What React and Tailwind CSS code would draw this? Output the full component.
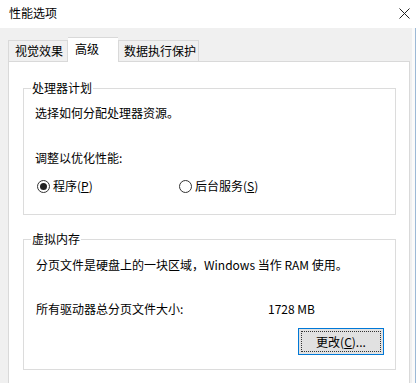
import React from 'react';

const Radio = ({ checked, label, hotkey }) => (
  <div className="flex items-center h-[16px]">
    <span className="w-[13px] h-[13px] rounded-full border border-[#333] bg-white flex items-center justify-center">
      {checked && <span className="w-[7px] h-[7px] rounded-full bg-[#222]" />}
    </span>
    <span className="ml-[3px]">
      {label}(<span className="underline">{hotkey}</span>)
    </span>
  </div>
);

const Group = ({ title, className, children }) => (
  <fieldset className={`border border-[#dcdcdc] w-[373px] ${className}`}>
    <legend className="ml-[7px] px-[1px] leading-[16px]">{title}</legend>
    {children}
  </fieldset>
);

export default function App() {
  return (
    <div className="w-[420px] h-[383px] overflow-hidden bg-white text-[12px] leading-[16px] text-black font-['Noto_Sans_CJK_SC','Noto_Sans',sans-serif]">
      {/* Title bar */}
      <div className="h-[28px] flex items-center justify-between pl-[9px] pr-[10px]">
        <span className="-mt-[2px]">性能选项</span>
        <svg width="11" height="11" viewBox="0 0 11 11" className="-mt-[2px]">
          <path d="M0.5 0.5 L10.5 10.5 M10.5 0.5 L0.5 10.5" stroke="#222" strokeWidth="1" fill="none" />
        </svg>
      </div>

      <div className="flex h-[355px]">
        <div className="w-[412px] bg-[#f0f0f0] pl-[8px] pt-[9px] flex flex-col">
          {/* Tabs */}
          <div className="flex items-end h-[24px] relative z-10">
            <div className="w-[60px] h-[21px] border border-b-0 border-[#d9d9d9] bg-[#f0f0f0] pl-[6px] flex items-center">
              视觉效果
            </div>
            <div className="w-[50px] h-[25px] -mb-px border-t border-[#d9d9d9] bg-white pl-[7px] pb-[3px] flex items-center">
              高级
            </div>
            <div className="w-[81px] h-[21px] border border-b-0 border-[#d9d9d9] bg-[#f0f0f0] pl-[5px] flex items-center">
              数据执行保护
            </div>
          </div>

          {/* Panel */}
          <div className="w-[402px] flex-1 bg-white border border-b-0 border-[#d9d9d9] pl-[14px] pt-[18px]">
            <Group title="处理器计划" className="h-[135px]">
              <div className="pl-[11px] pt-[9px]">
                <div>选择如何分配处理器资源。</div>
                <div className="mt-[29px]">调整以优化性能:</div>
                <div className="mt-[12px] flex">
                  <div className="w-[144px] pl-[2px]">
                    <Radio checked label="程序" hotkey="P" />
                  </div>
                  <Radio label="后台服务" hotkey="S" />
                </div>
              </div>
            </Group>

            <Group title="虚拟内存" className="mt-[16px] h-[139px]">
              <div className="pl-[12px] pt-[10px]">
                <div>分页文件是硬盘上的一块区域，Windows 当作 RAM 使用。</div>
                <div className="mt-[28px] flex">
                  <span className="w-[232px]">所有驱动器总分页文件大小:</span>
                  <span>1728 MB</span>
                </div>
                <div className="mt-[11px] flex justify-end pr-[11px]">
                  <div className="w-[86px] h-[27px] border border-[#0078d7] bg-[#e1e1e1] p-[2px]">
                    <div className="h-full border border-dotted border-[#333] flex items-center justify-center">
                      更改(<span className="underline">C</span>)...
                    </div>
                  </div>
                </div>
              </div>
            </Group>
          </div>
        </div>
        <div className="w-[3px] bg-[#fafafa]" />
        <div className="w-[1px] bg-[#9cb9d6]" />
        <div className="flex-1 bg-white" />
      </div>
    </div>
  );
}
